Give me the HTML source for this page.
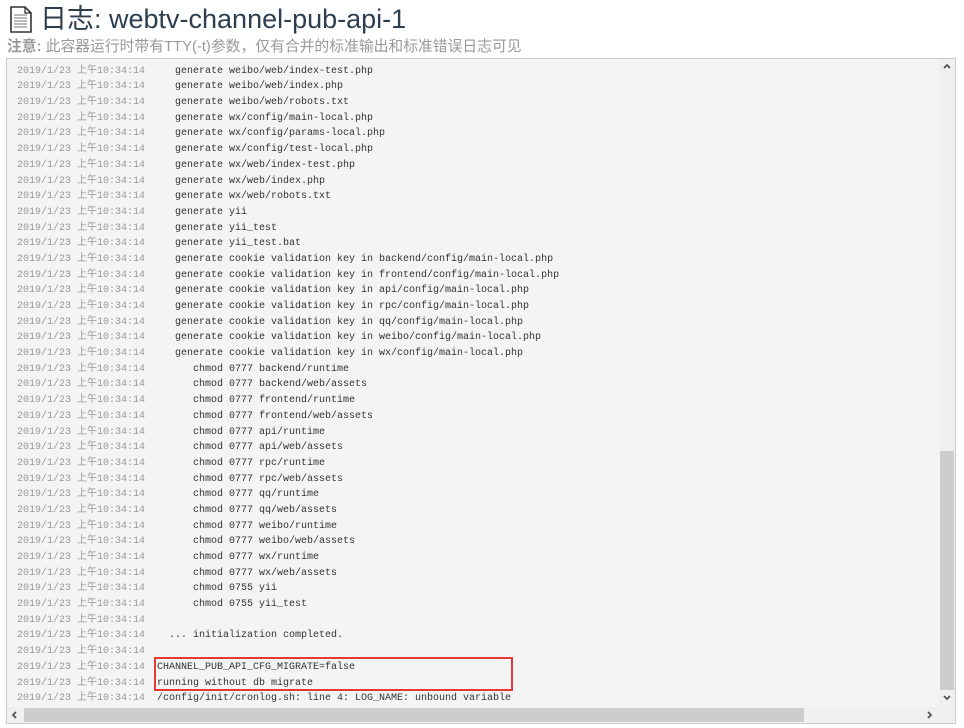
<!DOCTYPE html>
<html><head><meta charset="utf-8"><style>
body{margin:0;width:964px;height:728px;background:#fff;overflow:hidden;font-family:"Liberation Sans","Noto Sans CJK SC",sans-serif;position:relative}
h1{position:absolute;left:40px;top:2px;margin:0;font-size:27px;font-weight:normal;color:#2c3e50;line-height:34px}
.icon{position:absolute;left:10px;top:6px}
.note{position:absolute;left:7px;top:37px;font-size:14.8px;color:#999;line-height:20px}
.note b{color:#999}
.box{position:absolute;left:6px;top:58px;width:948px;height:664px;border:1px solid #ccc;background:#f4f4f4;overflow:hidden}
.lines{position:absolute;left:0;top:-11px;font-family:"Liberation Mono","Noto Sans CJK SC",monospace;font-size:10px}
.l{height:15.7px;line-height:15.7px;white-space:pre;position:relative}
.t{position:absolute;left:10px;color:#999}
.m{position:absolute;left:150px;color:#333}
.vs{position:absolute;right:0;top:0;width:16px;height:648px;background:#f0f0f0}
.vt{position:absolute;left:1px;top:392px;width:14px;height:239px;background:#cdcdcd}
.hs{position:absolute;left:0;bottom:0;width:932px;height:16px;background:#f0f0f0}
.ht{position:absolute;left:17px;top:1px;width:780px;height:14px;background:#cdcdcd}
.corner{position:absolute;right:0;bottom:0;width:16px;height:16px;background:#f0f0f0}
.arr{position:absolute}
.red{position:absolute;left:147px;top:598px;width:355px;height:30px;border:2px solid #e53935}
</style></head><body>
<svg class="icon" width="22" height="27" viewBox="0 0 22 27"><path d="M1 1h14l6 6v19H1z" fill="#fff" stroke="#333" stroke-width="1.6"/><path d="M15 1v6h6" fill="none" stroke="#333" stroke-width="1.3"/><g stroke="#777" stroke-width="1"><path d="M4 9h13M4 12h13M4 15h13M4 18h13M4 21h13"/></g></svg>
<h1>日志: webtv-channel-pub-api-1</h1>
<div class="note"><b>注意:</b> 此容器运行时带有TTY(-t)参数，仅有合并的标准输出和标准错误日志可见</div>
<div class="box">
<div class="lines">
<div class="l"><span class="t">2019/1/23 上午10:34:14</span><span class="m">   generate weibo/config/test-local.php</span></div>
<div class="l"><span class="t">2019/1/23 上午10:34:14</span><span class="m">   generate weibo/web/index-test.php</span></div>
<div class="l"><span class="t">2019/1/23 上午10:34:14</span><span class="m">   generate weibo/web/index.php</span></div>
<div class="l"><span class="t">2019/1/23 上午10:34:14</span><span class="m">   generate weibo/web/robots.txt</span></div>
<div class="l"><span class="t">2019/1/23 上午10:34:14</span><span class="m">   generate wx/config/main-local.php</span></div>
<div class="l"><span class="t">2019/1/23 上午10:34:14</span><span class="m">   generate wx/config/params-local.php</span></div>
<div class="l"><span class="t">2019/1/23 上午10:34:14</span><span class="m">   generate wx/config/test-local.php</span></div>
<div class="l"><span class="t">2019/1/23 上午10:34:14</span><span class="m">   generate wx/web/index-test.php</span></div>
<div class="l"><span class="t">2019/1/23 上午10:34:14</span><span class="m">   generate wx/web/index.php</span></div>
<div class="l"><span class="t">2019/1/23 上午10:34:14</span><span class="m">   generate wx/web/robots.txt</span></div>
<div class="l"><span class="t">2019/1/23 上午10:34:14</span><span class="m">   generate yii</span></div>
<div class="l"><span class="t">2019/1/23 上午10:34:14</span><span class="m">   generate yii_test</span></div>
<div class="l"><span class="t">2019/1/23 上午10:34:14</span><span class="m">   generate yii_test.bat</span></div>
<div class="l"><span class="t">2019/1/23 上午10:34:14</span><span class="m">   generate cookie validation key in backend/config/main-local.php</span></div>
<div class="l"><span class="t">2019/1/23 上午10:34:14</span><span class="m">   generate cookie validation key in frontend/config/main-local.php</span></div>
<div class="l"><span class="t">2019/1/23 上午10:34:14</span><span class="m">   generate cookie validation key in api/config/main-local.php</span></div>
<div class="l"><span class="t">2019/1/23 上午10:34:14</span><span class="m">   generate cookie validation key in rpc/config/main-local.php</span></div>
<div class="l"><span class="t">2019/1/23 上午10:34:14</span><span class="m">   generate cookie validation key in qq/config/main-local.php</span></div>
<div class="l"><span class="t">2019/1/23 上午10:34:14</span><span class="m">   generate cookie validation key in weibo/config/main-local.php</span></div>
<div class="l"><span class="t">2019/1/23 上午10:34:14</span><span class="m">   generate cookie validation key in wx/config/main-local.php</span></div>
<div class="l"><span class="t">2019/1/23 上午10:34:14</span><span class="m">      chmod 0777 backend/runtime</span></div>
<div class="l"><span class="t">2019/1/23 上午10:34:14</span><span class="m">      chmod 0777 backend/web/assets</span></div>
<div class="l"><span class="t">2019/1/23 上午10:34:14</span><span class="m">      chmod 0777 frontend/runtime</span></div>
<div class="l"><span class="t">2019/1/23 上午10:34:14</span><span class="m">      chmod 0777 frontend/web/assets</span></div>
<div class="l"><span class="t">2019/1/23 上午10:34:14</span><span class="m">      chmod 0777 api/runtime</span></div>
<div class="l"><span class="t">2019/1/23 上午10:34:14</span><span class="m">      chmod 0777 api/web/assets</span></div>
<div class="l"><span class="t">2019/1/23 上午10:34:14</span><span class="m">      chmod 0777 rpc/runtime</span></div>
<div class="l"><span class="t">2019/1/23 上午10:34:14</span><span class="m">      chmod 0777 rpc/web/assets</span></div>
<div class="l"><span class="t">2019/1/23 上午10:34:14</span><span class="m">      chmod 0777 qq/runtime</span></div>
<div class="l"><span class="t">2019/1/23 上午10:34:14</span><span class="m">      chmod 0777 qq/web/assets</span></div>
<div class="l"><span class="t">2019/1/23 上午10:34:14</span><span class="m">      chmod 0777 weibo/runtime</span></div>
<div class="l"><span class="t">2019/1/23 上午10:34:14</span><span class="m">      chmod 0777 weibo/web/assets</span></div>
<div class="l"><span class="t">2019/1/23 上午10:34:14</span><span class="m">      chmod 0777 wx/runtime</span></div>
<div class="l"><span class="t">2019/1/23 上午10:34:14</span><span class="m">      chmod 0777 wx/web/assets</span></div>
<div class="l"><span class="t">2019/1/23 上午10:34:14</span><span class="m">      chmod 0755 yii</span></div>
<div class="l"><span class="t">2019/1/23 上午10:34:14</span><span class="m">      chmod 0755 yii_test</span></div>
<div class="l"><span class="t">2019/1/23 上午10:34:14</span><span class="m"></span></div>
<div class="l"><span class="t">2019/1/23 上午10:34:14</span><span class="m">  ... initialization completed.</span></div>
<div class="l"><span class="t">2019/1/23 上午10:34:14</span><span class="m"></span></div>
<div class="l"><span class="t">2019/1/23 上午10:34:14</span><span class="m">CHANNEL_PUB_API_CFG_MIGRATE=false</span></div>
<div class="l"><span class="t">2019/1/23 上午10:34:14</span><span class="m">running without db migrate</span></div>
<div class="l"><span class="t">2019/1/23 上午10:34:14</span><span class="m">/config/init/cronlog.sh: line 4: LOG_NAME: unbound variable</span></div>
</div>
<div class="red"></div>
<div class="vs"><div class="vt"></div>
<svg class="arr" style="left:4px;top:4px" width="8" height="6"><path d="M1 5L4 2L7 5" fill="none" stroke="#555" stroke-width="1.8"/></svg>
<svg class="arr" style="left:4px;top:636px" width="8" height="6"><path d="M1 1L4 4L7 1" fill="none" stroke="#555" stroke-width="1.8"/></svg></div>
<div class="hs"><div class="ht"></div>
<svg class="arr" style="left:4px;top:4px" width="6" height="8"><path d="M5 1L2 4L5 7" fill="none" stroke="#555" stroke-width="1.8"/></svg>
<svg class="arr" style="left:920px;top:4px" width="6" height="8"><path d="M1 1L4 4L1 7" fill="none" stroke="#555" stroke-width="1.8"/></svg></div>
<div class="corner"></div>
</div>
</body></html>
